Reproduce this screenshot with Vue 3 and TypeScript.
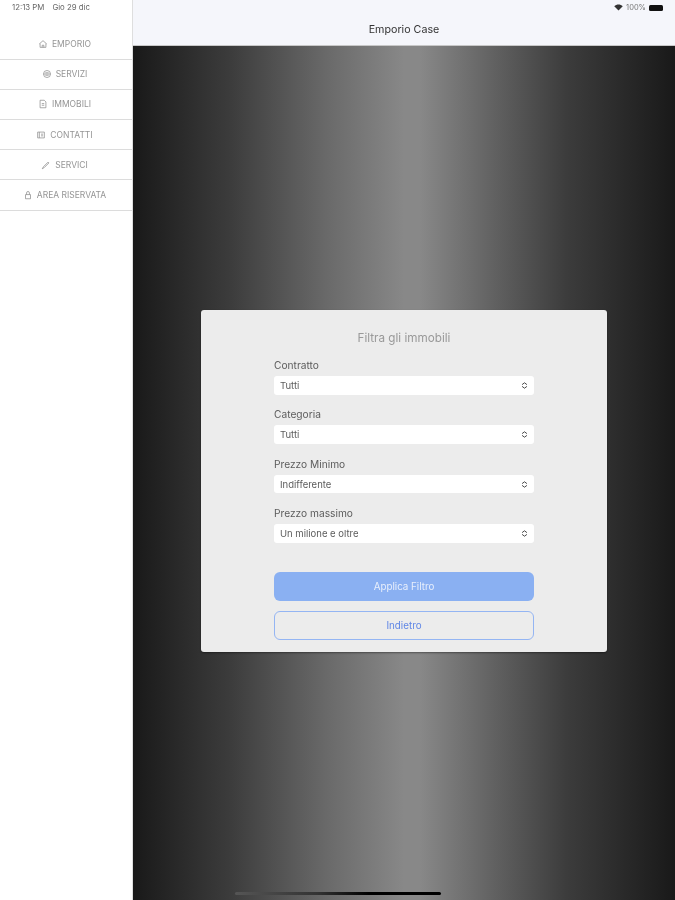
<template>
  <div class="screen">
    <!-- Menu laterale -->
    <aside class="sidebar">
      <div class="status-left soft">
        <span>12:13 PM</span>
        <span>Gio 29 dic</span>
      </div>
      <nav class="menu">
        <div v-for="item in menu" :key="item.label" class="menu-item">
          <svg class="menu-icon soft" viewBox="0 0 12 12" fill="none" stroke="#8d8d8d" stroke-width="0.9">
            <path :d="item.icon" />
          </svg>
          <span class="soft">{{ item.label }}</span>
        </div>
      </nav>
    </aside>

    <div class="content">
      <header class="topbar">
        <div class="status-right soft">
          <svg class="wifi" viewBox="0 0 12 9">
            <path d="M6 8.6 0.3 2.8C3.6-.2 8.4-.2 11.7 2.8Z" fill="#333" />
          </svg>
          <span>100%</span>
          <div class="battery"></div>
        </div>
        <div class="title soft">Emporio Case</div>
      </header>

      <main class="main">
        <section class="card">
          <h2 class="soft">Filtra gli immobili</h2>
          <div class="form">
            <div v-for="field in fields" :key="field.label" class="field">
              <label class="soft">{{ field.label }}</label>
              <div class="select">
                <span class="soft">{{ field.value }}</span>
                <svg class="arrows soft" viewBox="0 0 8 8" fill="none" stroke="#444" stroke-width="1.1">
                  <path d="M1.2 3 4 .9 6.8 3M1.2 5 4 7.1 6.8 5" />
                </svg>
              </div>
            </div>
            <button class="btn primary" type="button"><span class="soft">Applica Filtro</span></button>
            <button class="btn outline" type="button"><span class="soft">Indietro</span></button>
          </div>
        </section>
        <div class="home-indicator"></div>
      </main>
    </div>
  </div>
</template>

<script setup lang="ts">
const menu = [
  { label: 'EMPORIO', icon: 'M1.5 6 6 2l4.500 4M2.500 5.500V10h7V5.500M5 10V7.500h2V10' },
  { label: 'SERVIZI', icon: 'M6 1.800a4.200 4.200 0 1 0 0 8.400 4.200 4.200 0 0 0 0-8.400ZM2 6h8M4 4.500h4M4 7.500h4' },
  { label: 'IMMOBILI', icon: 'M2.500 1.500h5l2 2v7h-7ZM4.500 5.500h3M4.500 7.500h3' },
  { label: 'CONTATTI', icon: 'M2 2.500h8v7H2ZM4 2.500v7M6 5h2.500M6 7h2.500' },
  { label: 'SERVICI', icon: 'M1.500 10.500 3 8l5.500-5.500 1 1L4 9Z' },
  { label: 'AREA RISERVATA', icon: 'M3 5.500h6v5H3ZM4.300 5.500V3.500a1.700 1.700 0 0 1 3.400 0v2' }
]

const fields = [
  { label: 'Contratto', value: 'Tutti' },
  { label: 'Categoria', value: 'Tutti' },
  { label: 'Prezzo Minimo', value: 'Indifferente' },
  { label: 'Prezzo massimo', value: 'Un milione e oltre' }
]
</script>

<style>
html,
body {
  margin: 0;
  background: #fff;
}
</style>

<style scoped>
.screen {
  display: flex;
  width: 675px;
  height: 900px;
  overflow: hidden;
  font-family: Inter, 'Liberation Sans', sans-serif;
}

/* il riferimento e' uno screenshot ingrandito, testo un po' sfocato */
.soft {
  filter: blur(0.4px);
}

/* Menu laterale */
.sidebar {
  flex: 0 0 132px;
  box-sizing: content-box;
  background: #fff;
  border-right: 1px solid #dedede;
}

.status-left {
  display: flex;
  gap: 8px;
  height: 29.500px;
  padding: 3px 0 0 12px;
  box-sizing: border-box;
  font-size: 7.800px;
  line-height: 9px;
  color: #666;
}

.menu-item {
  display: flex;
  align-items: center;
  justify-content: center;
  gap: 4px;
  height: 30.200px;
  padding-right: 3px;
  box-sizing: border-box;
  border-bottom: 1px solid #dcdcdc;
  font-size: 8.500px;
  color: #959595;
}

.menu-icon {
  width: 10px;
  height: 10px;
}

.content {
  flex: 1;
  display: flex;
  flex-direction: column;
  min-width: 0;
}

.topbar {
  position: relative;
  height: 46px;
  box-sizing: border-box;
  background: #f5f6fb;
  border-bottom: 1px solid #c8c8c8;
}

.status-right {
  display: flex;
  align-items: center;
  justify-content: flex-end;
  gap: 3px;
  height: 15px;
  padding-right: 12px;
  font-size: 7.500px;
  color: #777;
}

.wifi {
  width: 9px;
  height: 7px;
}

.battery {
  width: 14px;
  height: 6px;
  background: #111;
  border-radius: 1.500px;
}

.title {
  margin-top: 8px;
  text-align: center;
  font-size: 10.700px;
  line-height: 14px;
  color: #333;
}

.main {
  position: relative;
  flex: 1;
  padding: 264px 68px 0 68px;
  background: linear-gradient(90deg, #191919 0%, #3c3c3c 18%, #6a6a6a 36%, #888 50%, #888 53%, #606060 67%, #3c3c3c 80%, #191919 100%);
}

.card {
  height: 342px;
  box-sizing: border-box;
  padding-top: 20px;
  background: #ececec;
  border-radius: 3px;
  box-shadow: 0 1px 2px rgba(0, 0, 0, 0.4);
}

.card h2 {
  margin: 0 0 13px;
  text-align: center;
  font-size: 11.700px;
  font-weight: 400;
  line-height: 16px;
  color: #999;
}

.form {
  display: flex;
  flex-direction: column;
  width: 260px;
  margin: 0 auto;
}

.field {
  display: flex;
  flex-direction: column;
  gap: 4px;
  height: 49.400px;
}

.field label {
  font-size: 10.200px;
  line-height: 13px;
  color: #5c5c5c;
}

.select {
  display: flex;
  align-items: center;
  justify-content: space-between;
  height: 18.500px;
  padding: 0 6px;
  box-sizing: border-box;
  background: #fff;
  border-radius: 3px;
  font-size: 9.500px;
  color: #5c5c5c;
}

.arrows {
  width: 7px;
  height: 7px;
}

.btn {
  height: 29px;
  border-radius: 6px;
  box-sizing: border-box;
  font-family: inherit;
  font-size: 9.800px;
  padding: 0;
}

.primary {
  margin-top: 15px;
  border: none;
  background: #8ab0f2;
  color: #e8effc;
}

.outline {
  margin-top: 10px;
  border: 1px solid #94b5f3;
  background: transparent;
  color: #5f86e6;
}

.home-indicator {
  position: absolute;
  left: 102px;
  bottom: 5px;
  width: 206px;
  height: 3px;
  border-radius: 2px;
  background: linear-gradient(90deg, #555 0%, #333 40%, #000 65%, #000 100%);
}
</style>
